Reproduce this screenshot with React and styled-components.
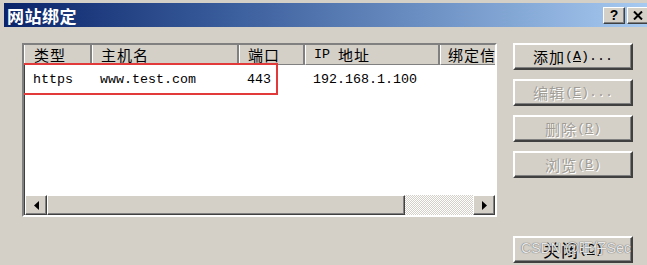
import styled, { createGlobalStyle } from "styled-components";

const GlobalStyle = createGlobalStyle`
    html, body {
        margin: 0;
        padding: 0;
        background: #d4d0c8;
    }
`;

const cjk = `"Noto Sans CJK SC", "Liberation Sans", sans-serif`;
const mono = `"Liberation Mono", "Noto Sans CJK SC", monospace`;

const Window = styled.div`
    width: 647px;
    height: 265px;
    box-sizing: border-box;
    padding: 3px 0 0 4px;
    background: #d4d0c8;
    display: flex;
    flex-direction: column;
    overflow: hidden;
`;

const TitleBar = styled.div`
    height: 24px;
    display: flex;
    align-items: center;
    justify-content: space-between;
    padding-left: 3px;
    background: linear-gradient(to right, #0a246a 0%, #3a5d9c 35%, #a6caf0 100%);
`;

const Title = styled.span`
    font-family: ${cjk};
    font-size: 17px;
    font-weight: bold;
    color: #fff;
    letter-spacing: 0.5px;
`;

const Controls = styled.div`
    display: flex;
    gap: 2px;
    margin-right: -2px;
`;

const CtrlButton = styled.div`
    width: 22px;
    height: 17px;
    box-sizing: border-box;
    background: #d4d0c8;
    border-top: 1px solid #fff;
    border-left: 1px solid #fff;
    border-right: 1px solid #404040;
    border-bottom: 1px solid #404040;
    box-shadow: inset -1px -1px #808080;
    display: flex;
    align-items: center;
    justify-content: center;
    font-family: "Liberation Sans", sans-serif;
    font-weight: bold;
    font-size: 14px;
    color: #000;
`;

const Body = styled.div`
    flex: 1;
    display: flex;
    padding: 16px 0 2px 18px;
`;

const ListBox = styled.div`
    position: relative;
    width: 475px;
    height: 174px;
    box-sizing: border-box;
    background: #fff;
    border-top: 2px solid #808080;
    border-left: 2px solid #808080;
    border-right: 2px solid #fff;
    border-bottom: 2px solid #fff;
    box-shadow: inset 1px 1px #404040;
    display: flex;
    flex-direction: column;
    overflow: hidden;
`;

const Row = styled.div`
    display: flex;
    height: ${(p) => p.$h}px;
    align-items: center;
    flex-shrink: 0;
`;

const HeadCell = styled.div`
    width: ${(p) => p.$w}px;
    height: 100%;
    flex-shrink: 0;
    box-sizing: border-box;
    padding-left: ${(p) => p.$pad ?? 8}px;
    background: #d4d0c8;
    border-left: 1px solid #fff;
    border-bottom: 1px solid #808080;
    border-right: 2px solid #808080;
    display: flex;
    align-items: center;
    font-family: ${mono};
    font-size: 13.33px;
    line-height: 18px;
    color: #000;
    white-space: pre;
    overflow: hidden;
`;

const Cjk = styled.span`
    font-family: ${cjk};
    font-size: ${(p) => (p.$big ? 17 : 15)}px;
    letter-spacing: 1px;
    line-height: 18px;
`;

const Cell = styled.div`
    width: ${(p) => p.$w}px;
    flex-shrink: 0;
    box-sizing: border-box;
    padding-left: ${(p) => p.$pad ?? 8}px;
    font-family: ${mono};
    font-size: 13.33px;
    color: #000;
    white-space: nowrap;
`;

const Highlight = styled.div`
    position: absolute;
    left: -3px;
    top: 18px;
    width: 257px;
    height: 32px;
    box-sizing: border-box;
    border: 2px solid #e2393b;
`;

const Filler = styled.div`
    flex: 1;
`;

const ScrollBar = styled.div`
    height: 20px;
    display: flex;
    flex-shrink: 0;
    padding-left: 1px;
`;

const Raised = styled.div`
    box-sizing: border-box;
    height: 100%;
    background: #d4d0c8;
    border-top: 1px solid #fff;
    border-left: 1px solid #fff;
    border-right: 1px solid #404040;
    border-bottom: 1px solid #404040;
    box-shadow: inset -1px -1px #808080;
`;

const Arrow = styled(Raised)`
    width: 22px;
    display: flex;
    align-items: center;
    justify-content: center;
`;

const Thumb = styled(Raised)`
    width: 358px;
`;

const Track = styled.div`
    flex: 1;
    background: repeating-conic-gradient(#d4d0c8 0 25%, #ffffff 0 50%) 0 0 / 2px 2px;
`;

const ButtonColumn = styled.div`
    position: relative;
    margin-left: 16px;
    width: 120px;
    display: flex;
    flex-direction: column;
    gap: 9px;
`;

const Button = styled.div`
    height: 27px;
    box-sizing: border-box;
    background: #d4d0c8;
    border-top: 2px solid #fff;
    border-left: 2px solid #fff;
    border-right: 2px solid #404040;
    border-bottom: 2px solid #404040;
    box-shadow: inset -1px -1px #808080;
    display: flex;
    align-items: center;
    justify-content: center;
    font-family: ${mono};
    font-size: 13.33px;
    color: ${(p) => (p.$disabled ? "#a09d96" : "#000")};
    text-shadow: ${(p) => (p.$disabled ? "1px 1px #fff" : "none")};
    white-space: nowrap;
    margin-top: ${(p) => (p.$bottom ? "auto" : "0")};
`;

const Key = styled.span`
    text-decoration: underline;
`;

const Watermark = styled.span`
    position: absolute;
    right: 2px;
    bottom: 6px;
    font-family: "Liberation Sans", "Noto Sans CJK SC", sans-serif;
    font-size: 14px;
    color: rgba(255, 255, 255, 0.85);
    text-shadow: 0 0 1px #6b6b6b, 0 0 1px #6b6b6b;
    white-space: nowrap;
`;

const columns = [
    { key: "type", label: "类型", w: 68, pad: 9 },
    { key: "host", label: "主机名", w: 147, pad: 8 },
    { key: "port", label: "端口", w: 66, pad: 8 },
    { key: "ip", label: "IP 地址", w: 135, pad: 8 },
    { key: "info", label: "绑定信息", w: 90, pad: 7 },
];

const bindings = [
    { type: "https", host: "www.test.com", port: "443", ip: "192.168.1.100", info: "" },
];

function HeadLabel({ text }) {
    if (text.startsWith("IP")) {
        return (
            <>
                {"IP "}
                <Cjk>地址</Cjk>
            </>
        );
    }
    return <Cjk>{text}</Cjk>;
}

function ActionButton({ label, k, disabled, bottom, dots = true }) {
    return (
        <Button $disabled={disabled} $bottom={bottom}>
            <Cjk $big={bottom}>{label}</Cjk>(<Key>{k}</Key>){dots ? "..." : ""}
        </Button>
    );
}

export default function App() {
    return (
        <>
            <GlobalStyle />
            <Window>
                <TitleBar>
                    <Title>网站绑定</Title>
                    <Controls>
                        <CtrlButton>?</CtrlButton>
                        <CtrlButton>
                            <svg width="10" height="9" viewBox="0 0 10 9">
                                <path d="M1 0.5 L9 8.5 M9 0.5 L1 8.5" stroke="#000" strokeWidth="2" />
                            </svg>
                        </CtrlButton>
                    </Controls>
                </TitleBar>

                <Body>
                    <ListBox>
                        <Row $h={20}>
                            {columns.map((c) => (
                                <HeadCell key={c.key} $w={c.w} $pad={c.pad}>
                                    <HeadLabel text={c.label} />
                                </HeadCell>
                            ))}
                        </Row>
                        {bindings.map((b) => (
                            <Row $h={29} key={b.host}>
                                {columns.map((c) => (
                                    <Cell key={c.key} $w={c.w} $pad={c.pad}>
                                        {b[c.key]}
                                    </Cell>
                                ))}
                            </Row>
                        ))}
                        <Highlight />
                        <Filler />
                        <ScrollBar>
                            <Arrow>
                                <svg width="5" height="9" viewBox="0 0 5 9">
                                    <path d="M5 0 L0 4.5 L5 9 Z" fill="#000" />
                                </svg>
                            </Arrow>
                            <Thumb />
                            <Track />
                            <Arrow>
                                <svg width="5" height="9" viewBox="0 0 5 9">
                                    <path d="M0 0 L5 4.5 L0 9 Z" fill="#000" />
                                </svg>
                            </Arrow>
                        </ScrollBar>
                    </ListBox>

                    <ButtonColumn>
                        <ActionButton label="添加" k="A" />
                        <ActionButton label="编辑" k="E" disabled />
                        <ActionButton label="删除" k="R" disabled dots={false} />
                        <ActionButton label="浏览" k="B" disabled dots={false} />
                        <ActionButton label="关闭" k="C" bottom dots={false} />
                        <Watermark>CSDN @旺仔Sec</Watermark>
                    </ButtonColumn>
                </Body>
            </Window>
        </>
    );
}
